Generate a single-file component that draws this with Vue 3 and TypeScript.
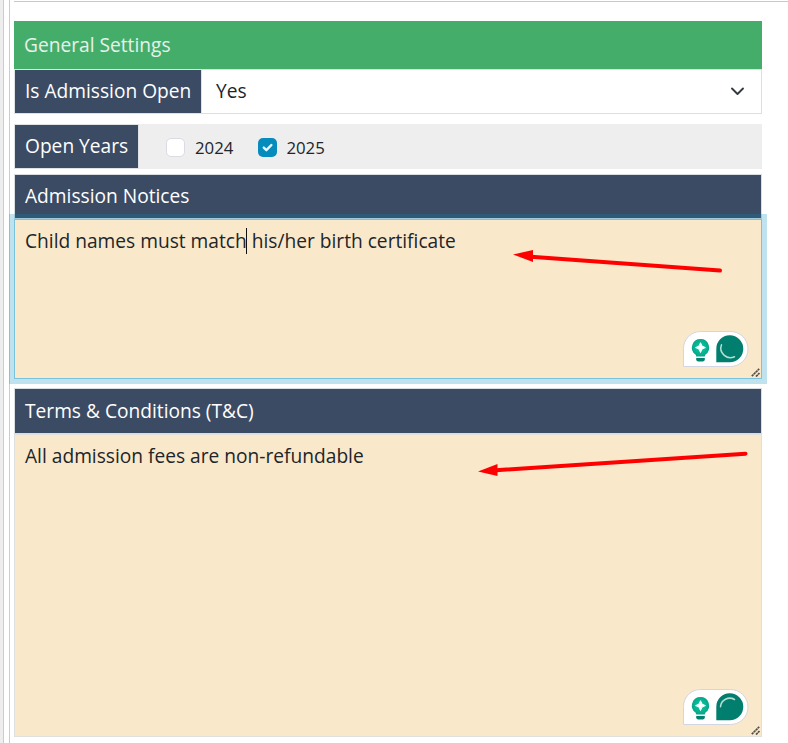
<script setup lang="ts">
import { ref } from 'vue'

interface Year {
  label: string
  checked: boolean
}

const years = ref<Year[]>([
  { label: '2024', checked: false },
  { label: '2025', checked: true },
])

const notices = [
  {
    key: 'notices',
    title: 'Admission Notices',
    before: 'Child names must match',
    after: ' his/her birth certificate',
    focused: true,
    arc: 'M38.500 13.800A9.500 9.500 0 0 0 51.500 25.700',
  },
  {
    key: 'terms',
    title: 'Terms & Conditions (T&C)',
    before: 'All admission fees are non-refundable',
    after: '',
    focused: false,
    arc: 'M37.500 17.800A9.300 9.300 0 0 1 51.500 10.500',
  },
]
</script>

<template>
  <div class="page">
    <div class="gutter"></div>
    <main class="panel">
      <div class="rule"></div>
      <div class="form">
        <header class="heading">General Settings</header>

        <div class="row select-row">
          <div class="label">Is Admission Open</div>
          <div class="select">
            <span>Yes</span>
            <svg width="16" height="16" viewBox="0 0 16 16">
              <path d="M2 5.500l5.500 5.500 5.500-5.500" fill="none" stroke="#343a40" stroke-width="1.900" stroke-linecap="round" stroke-linejoin="round" />
            </svg>
          </div>
        </div>

        <div class="row years-row">
          <div class="label">Open Years</div>
          <div class="years">
            <div v-for="y in years" :key="y.label" class="year" @click="y.checked = !y.checked">
              <span class="check" :class="{ on: y.checked }">
                <svg v-if="y.checked" width="19" height="19" viewBox="0 0 19 19">
                  <path d="M5.800 9.600l2.600 2.600 5-5.200" fill="none" stroke="#e8f6fb" stroke-width="2.400" stroke-linecap="round" stroke-linejoin="round" />
                </svg>
              </span>
              <span class="year-text">{{ y.label }}</span>
            </div>
          </div>
        </div>

        <section v-for="n in notices" :key="n.key" class="notice" :class="n.key">
          <div class="title">{{ n.title }}</div>
          <div class="area" :class="{ focused: n.focused }">
            <p>{{ n.before }}<i v-if="n.focused" class="caret"></i>{{ n.after }}</p>

            <svg v-if="n.focused" class="arrow arrow-notices" width="212" height="26" viewBox="0 0 212 26">
              <path d="M18 8.700L207 22.500" stroke="#f00" stroke-width="4" stroke-linecap="round" />
              <path d="M0 6.500L20 2V14Z" fill="#f00" />
            </svg>
            <svg v-else class="arrow arrow-terms" width="272" height="28" viewBox="0 0 272 28">
              <path d="M18 20.200L267.500 3.700" stroke="#f00" stroke-width="4" stroke-linecap="round" />
              <path d="M0 21.500L19.500 14V26Z" fill="#f00" />
            </svg>

            <svg class="assist" width="66" height="36" viewBox="0 0 66 36">
              <defs>
                <radialGradient :id="'bulb-' + n.key">
                  <stop offset=".3" stop-color="#04c49d" />
                  <stop offset="1" stop-color="#08a58a" />
                </radialGradient>
              </defs>
              <path d="M.5 35.500V17.500A17 17 0 0 1 17.500 .5H47.500A17.500 17.500 0 0 1 47.500 35.500Z" fill="#fff" stroke="#d3d5e2" />
              <g transform="translate(-.5 0)">
                <path d="M18 8a8.600 8.600 0 0 0-5 15.600l.8 2h8.400l.8-2A8.600 8.600 0 0 0 18 8Z" :fill="`url(#bulb-${n.key})`" />
                <path d="M18 11.700l1.500 3.400 3.400 1.500-3.400 1.500L18 21.500l-1.500-3.400-3.400-1.500 3.400-1.500Z" fill="#fff" stroke="#fff" stroke-linejoin="round" />
                <path d="M13.700 27h8.600v1.300a2.200 2.200 0 0 1-2.200 2.200h-4.200a2.200 2.200 0 0 1-2.200-2.200Z" fill="#02816f" />
              </g>
              <path d="M33.300 31.300V18a13.500 13.500 0 1 1 13.500 13.300Z" fill="#027e6f" />
              <path :d="n.arc" fill="none" stroke="#b5dfd4" stroke-width="1.500" stroke-linecap="round" />
            </svg>
            <svg class="grip" width="9" height="9" viewBox="0 0 9 9">
              <path d="M.8 8.200L8.200 .8M5 8.500L8.500 5" stroke="#514d46" stroke-width="1.700" stroke-dasharray="2.400 .4" />
            </svg>
          </div>
        </section>
      </div>
    </main>
  </div>
</template>

<style>
body {
  background: #fff;
  overflow: hidden;
}
</style>

<style scoped>
.page {
  display: flex;
  height: 743px;
  font-family: 'Open Sans', 'Noto Sans', sans-serif;
  font-size: 19.17px;
  line-height: 28px;
  color: #212529;
}
.page * {
  box-sizing: border-box;
}
.gutter {
  width: 4px;
  flex: none;
  background: #eee;
  border-right: 1px solid #ccc;
}
.panel {
  flex: 1;
  margin-left: 5px;
  padding: 1px 0 0 4px;
  border-left: 1px solid #ccc;
}
.rule {
  height: 1px;
  background: #c8c8c8;
}
.form {
  width: 748px;
  padding-top: 19px;
}
.heading {
  height: 48px;
  padding: 10px;
  background: #45ad6a;
  color: #e6f1ea;
}
.row {
  display: flex;
  height: 45px;
}
.label {
  padding: 7px 10px;
  border: 1px solid #dee2e6;
  background: #3c4b64;
  color: #fff;
  white-space: nowrap;
}
.select-row .label {
  width: 188px;
}
.select {
  flex: 1;
  display: flex;
  align-items: center;
  justify-content: space-between;
  padding: 0 15px 2px 14px;
  border: 1px solid #dcdfe1;
  border-left: 0;
}
.years-row {
  margin-top: 10px;
  background: #eee;
}
.years-row .label {
  width: 125px;
}
.years {
  display: flex;
  gap: 24.6px;
  padding: 2px 0 0 27px;
}
.year {
  display: flex;
  align-items: center;
  gap: 10px;
}
.year:last-child {
  gap: 9.4px;
}
.year-text {
  font-size: 16.8px;
}
.check {
  display: block;
  width: 19px;
  height: 19px;
  border: 1px solid #dadbe4;
  border-radius: 5px;
  background: #fff;
}
.check.on {
  border: 0;
  background: #058cbd;
}
.check svg {
  display: block;
}
.notice {
  margin-top: 5px;
}
.notice.terms {
  margin-top: 9px;
}
.title {
  height: 45px;
  padding: 7px 10px;
  border: 1px solid #d8dde2;
  background: #3c4b64;
  color: #fff;
}
.terms .title {
  height: 46px;
  padding-top: 8px;
}
.area {
  position: relative;
  height: 160px;
  padding: 7px 10px;
  border: 1px solid #dfe0e0;
  background: #fae8cb;
}
.area.focused {
  border-color: #79c3dc;
  box-shadow: 0 0 0 5px rgba(5, 140, 189, 0.25);
}
.terms .area {
  height: 303px;
}
p {
  margin: 0;
  white-space: pre;
}
.caret {
  display: inline-block;
  width: 1px;
  height: 26px;
  margin: 0 -0.3px 0 -0.7px;
  vertical-align: -6px;
  background: #111;
}
.arrow {
  position: absolute;
}
.arrow-notices {
  left: 498px;
  top: 28px;
}
.arrow-terms {
  left: 463px;
  top: 15px;
}
.assist {
  position: absolute;
  right: 12px;
  bottom: 11px;
}
.grip {
  position: absolute;
  right: 1px;
  bottom: 1px;
}
</style>
